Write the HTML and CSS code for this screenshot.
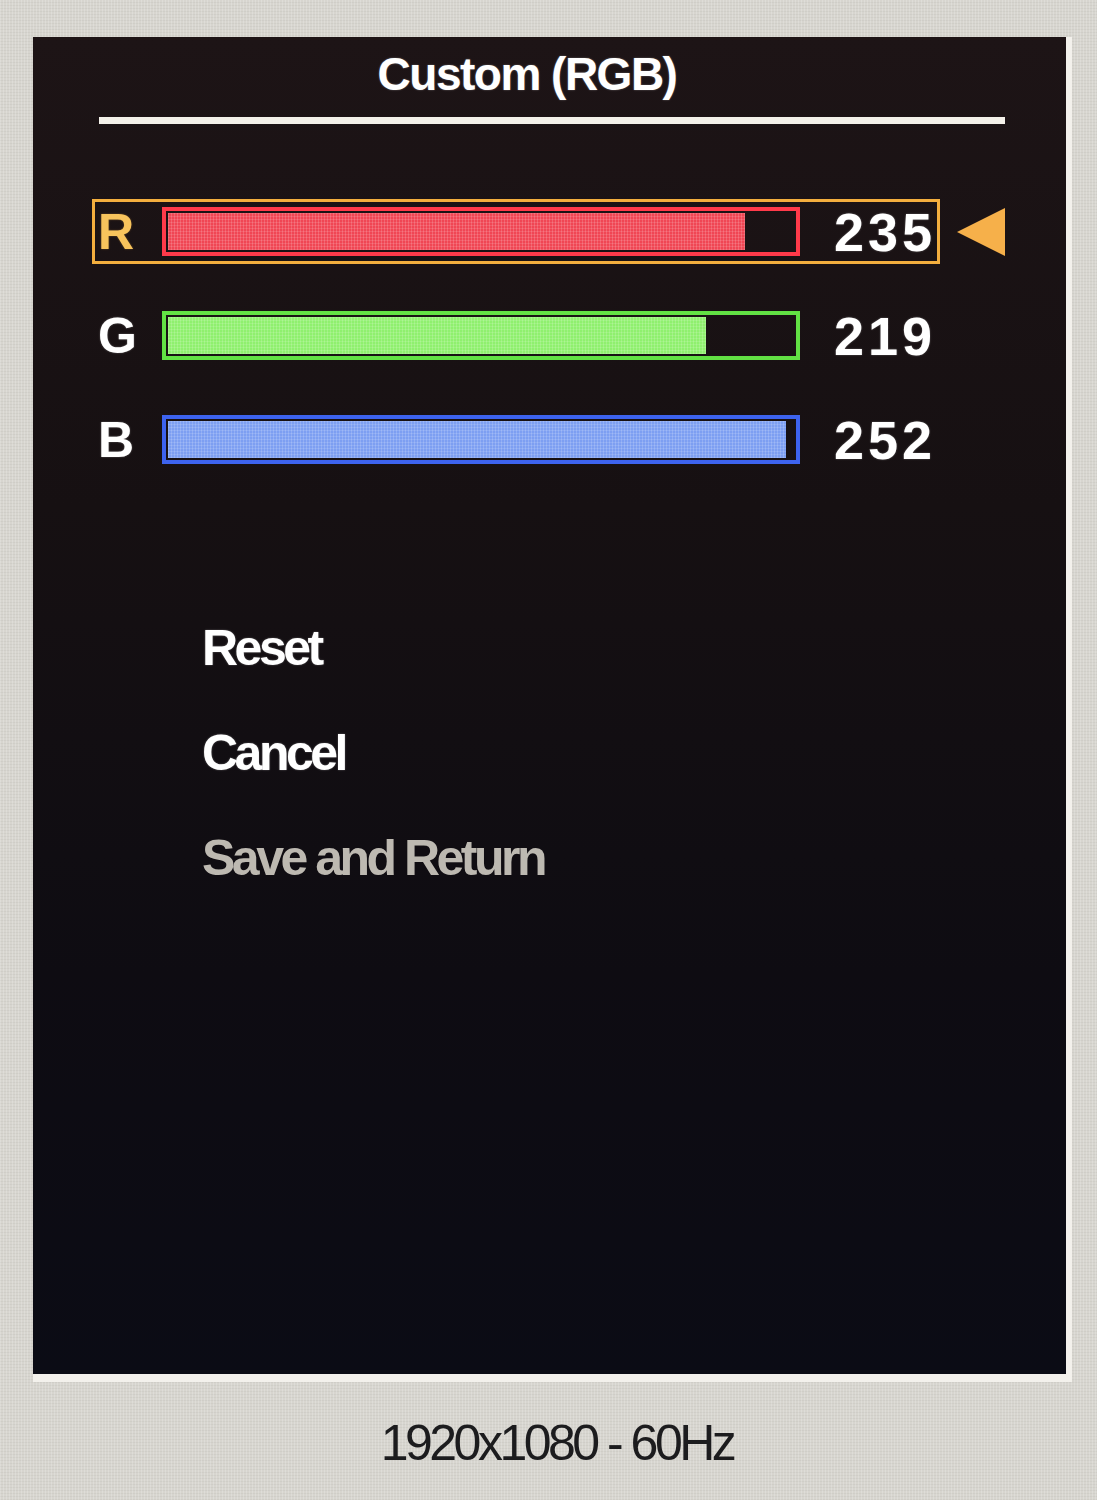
FILE: index.html
```html
<!DOCTYPE html>
<html lang="en">
<head>
<meta charset="utf-8">
<title>Custom (RGB)</title>
<link rel="stylesheet" href="styles.css">
</head>
<body>
<div class="screen">
  <div class="osd">
    <h1 class="title">Custom (RGB)</h1>
    <div class="rule"></div>

    <div class="rows">
      <div class="row-line">
        <div class="row selected">
          <span class="letter">R</span>
          <div class="bar bar-red"><div class="fill" style="width: 92.2%"></div></div>
          <span class="value">235</span>
        </div>
        <svg class="pointer" width="48" height="48" viewBox="0 0 48 48" aria-hidden="true">
          <polygon points="0,24 48,0 48,48" fill="#f6b04a"/>
        </svg>
      </div>
      <div class="row-line">
        <div class="row">
          <span class="letter">G</span>
          <div class="bar bar-green"><div class="fill" style="width: 85.9%"></div></div>
          <span class="value">219</span>
        </div>
      </div>
      <div class="row-line">
        <div class="row">
          <span class="letter">B</span>
          <div class="bar bar-blue"><div class="fill" style="width: 98.8%"></div></div>
          <span class="value">252</span>
        </div>
      </div>
    </div>

    <ul class="menu">
      <li class="item">Reset</li>
      <li class="item">Cancel</li>
      <li class="item dim">Save and Return</li>
    </ul>
  </div>
  <div class="status">1920x1080 - 60Hz</div>
</div>
</body>
</html>
```

FILE: styles.css
```css
html, body {
  margin: 0;
  padding: 0;
}

body {
  width: 1097px;
  height: 1500px;
  overflow: hidden;
  background-color: #d7d5cf;
  background-image:
    repeating-linear-gradient(90deg, rgba(255,255,255,0.18) 0 1px, transparent 1px 3px),
    repeating-linear-gradient(0deg, rgba(120,120,110,0.08) 0 1px, transparent 1px 3px);
  font-family: "Liberation Sans", Arial, sans-serif;
}

.screen {
  padding-top: 37px;
}

.osd {
  box-sizing: content-box;
  margin-left: 33px;
  width: 1033px;
  height: 1325px;
  padding-top: 12px;
  background: linear-gradient(180deg, #1d1416 0%, #161012 35%, #0e0c12 70%, #0b0c15 100%);
  border-right: 6px solid #f3f1ec;
  border-bottom: 8px solid #f3f1ec;
}

.title {
  margin: 0;
  padding-right: 45px;
  height: 50px;
  line-height: 50px;
  font-size: 46px;
  font-weight: bold;
  letter-spacing: -1.5px;
  text-align: center;
  color: #ffffff;
  text-shadow: 0 0 2px rgba(255,255,255,0.35);
}

.rule {
  margin: 18px 0 0 66px;
  width: 906px;
  height: 7px;
  background: #f4f1ea;
}

.rows {
  margin: 75px 0 0 59px;
  display: flex;
  flex-direction: column;
  gap: 39px;
}

.row-line {
  display: flex;
  align-items: center;
}

.row {
  box-sizing: border-box;
  width: 848px;
  height: 65px;
  border: 3px solid transparent;
  padding-left: 3px;
  display: flex;
  align-items: center;
}

.row.selected {
  border-color: #f3ae3e;
}

.pointer {
  display: block;
  margin-left: 17px;
}

.letter {
  width: 64px;
  font-size: 50px;
  line-height: 50px;
  font-weight: bold;
  color: #ffffff;
  text-shadow: 0 0 2px rgba(255,255,255,0.35);
}

.row.selected .letter {
  color: #f7c35c;
  text-shadow: 0 0 2px rgba(247,180,80,0.4);
}

.bar {
  box-sizing: border-box;
  width: 638px;
  height: 49px;
  border: 4px solid;
  padding: 2px;
}

.fill {
  height: 100%;
  background-image:
    repeating-linear-gradient(90deg, rgba(255,255,255,0.16) 0 1px, transparent 1px 3px),
    repeating-linear-gradient(0deg, rgba(255,255,255,0.12) 0 1px, transparent 1px 3px);
}

.bar-red {
  border-color: #ff3a4a;
}
.bar-red .fill {
  background-color: #f04654;
}

.bar-green {
  border-color: #62e144;
}
.bar-green .fill {
  background-color: #8ff06e;
}

.bar-blue {
  border-color: #3d63ee;
}
.bar-blue .fill {
  background-color: #7d9ff2;
}

.value {
  margin-left: 34px;
  font-size: 54px;
  line-height: 54px;
  font-weight: bold;
  letter-spacing: 4px;
  color: #ffffff;
  text-shadow: 0 0 2px rgba(255,255,255,0.35);
}

.menu {
  list-style: none;
  margin: 146px 0 0 169px;
  padding: 0;
  display: flex;
  flex-direction: column;
  gap: 45px;
}

.item {
  height: 60px;
  line-height: 60px;
  font-size: 50px;
  font-weight: bold;
  letter-spacing: -3.5px;
  color: #ffffff;
  text-shadow: 0 0 2px rgba(255,255,255,0.35);
}

.item.dim {
  color: #bdb9b1;
  text-shadow: none;
}

.status {
  margin-top: 31px;
  padding-left: 17px;
  height: 60px;
  line-height: 60px;
  font-size: 50px;
  letter-spacing: -3.5px;
  text-align: center;
  color: #1c1c1e;
}
```
